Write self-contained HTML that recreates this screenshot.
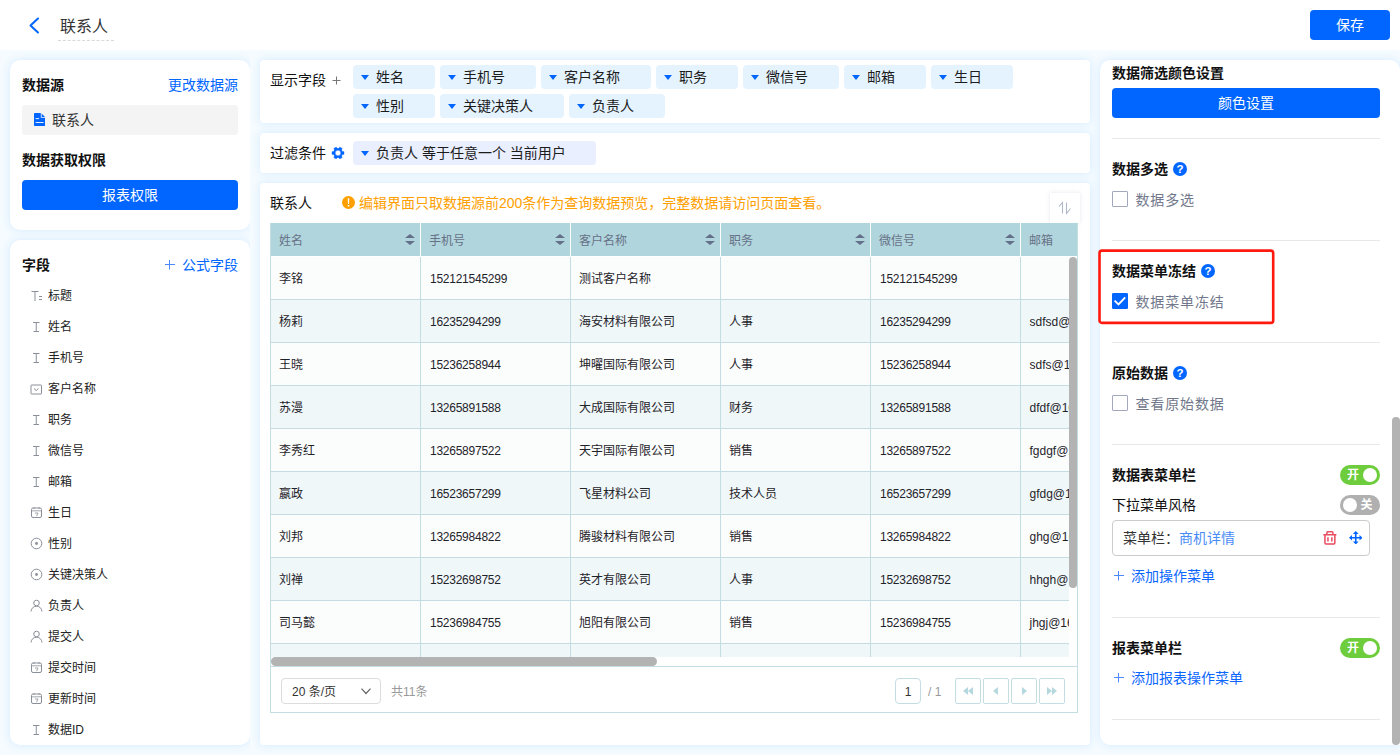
<!DOCTYPE html>
<html lang="zh-CN">
<head>
<meta charset="utf-8">
<title>联系人</title>
<style>
*{box-sizing:border-box;margin:0;padding:0}
html,body{width:1400px;height:755px;overflow:hidden}
body{background:#f5fbff;font-family:"Liberation Sans","Noto Sans CJK SC",sans-serif;font-size:14px;color:#1f2329;position:relative}
.abs{position:absolute}
.header{position:absolute;left:0;top:0;width:1400px;height:50px;background:#fff}
.back{position:absolute;left:28px;top:17px;width:12px;height:17px}
.title{position:absolute;left:58px;top:13px;width:56px;height:28px;border-bottom:1px dashed #d9d9d9}
.btn{position:absolute;background:#0066ff;color:#fff;text-align:center;border-radius:4px;font-size:14px}
.save{left:1310px;top:10px;width:80px;height:30px;line-height:30px}
.panel{position:absolute;background:#fff;border-radius:10px;box-shadow:0 0 8px #d3e9ff}
.panel.m{border-radius:4px}
.h{position:absolute;font-weight:bold;font-size:14px;line-height:20px;color:#111;white-space:nowrap}
.link{position:absolute;font-size:14px;line-height:20px;color:#0066ff;white-space:nowrap}
.t{position:absolute;white-space:nowrap;line-height:20px}
.tag{position:absolute;height:24px;border-radius:4px;background:#e5f3ff;font-size:14px;line-height:24px;color:#1c1c1c;padding-left:23px;white-space:nowrap}
.tag:before{content:"";position:absolute;left:8px;top:10px;border:4.5px solid transparent;border-top:5px solid #0066ff;border-bottom:0}
.th{position:absolute;top:0;height:33px;width:150px;line-height:37px;font-size:12px;color:#677186;padding-left:8px;border-left:1px solid #fff;white-space:nowrap;overflow:hidden}
.th i{position:absolute;right:5px;top:11px;width:10px;height:11px}
.th i:before{content:"";position:absolute;left:0;top:0;border:5px solid transparent;border-bottom:4px solid #64708a;border-top:0}
.th i:after{content:"";position:absolute;left:0;bottom:0;border:5px solid transparent;border-top:4px solid #64708a;border-bottom:0}
.tr{position:absolute;left:0;width:808px;height:43px;border-bottom:1px solid #c3dde3;background:#fbfdfd}
.tr.e{background:#eff7f9}
.td{position:absolute;top:0;height:42px;width:150px;line-height:45px;font-size:12px;color:#1f2329;padding-left:8px;border-left:1px solid #c3dde3;white-space:nowrap;overflow:hidden}
.td.n{letter-spacing:-.25px;padding-left:9px}
.td.m{padding-left:8.5px}
.pb{position:absolute;top:455px;width:26px;height:26px;border:1px solid #c3dde3;border-radius:2px;background:#fff}
.hr{position:absolute;left:12px;width:268px;height:1px;background:#e8e8e8}
.q{position:absolute;width:14px;height:14px;border-radius:50%;background:#0066ff;color:#fff;font-size:11.5px;line-height:14px;text-align:center;font-weight:bold}
.cb{position:absolute;left:12px;width:16px;height:16px;border:1px solid #a3a8bf;border-radius:1px;background:#fff}
.cb.on{background:#0066ff;border-color:#0066ff}
.cl{position:absolute;left:35.5px;font-size:14px;line-height:22px;color:#72788b;letter-spacing:.85px;white-space:nowrap}
.sw{position:absolute;left:240px;width:40px;height:20px;border-radius:10px;background:#6ecd3c;color:#fff;font-size:12px;font-weight:bold;line-height:20px}
.sw b{position:absolute;top:3px;width:14px;height:14px;border-radius:50%;background:#fff}
</style>
</head>
<body>
<div class="header">
  <svg class="back" viewBox="0 0 12 17"><polyline points="10,1.5 2.5,8.5 10,15.5" fill="none" stroke="#0066ff" stroke-width="2" stroke-linecap="round" stroke-linejoin="round"/></svg>
  <div class="title"></div>
  <div class="t" style="left:60px;top:17px;font-size:16px;color:#333">联系人</div>
  <div class="btn save">保存</div>
</div>
<div class="panel" style="left:10px;top:60px;width:240px;height:170px">
  <div class="h" style="left:12px;top:15px">数据源</div>
  <div class="link" style="right:12px;top:15px">更改数据源</div>
  <div class="abs" style="left:12px;top:45px;width:216px;height:30px;background:#f4f4f4;border-radius:3px">
    <svg class="abs" style="left:11.5px;top:8px" width="11.4" height="13" viewBox="0 0 11.4 13"><path d="M.8 0H6.8V4.7H11.4V12.2a.8 .8 0 0 1-.8 .8H.8a.8 .8 0 0 1-.8-.8V.8a.8 .8 0 0 1 .8-.8z" fill="#0066ff"/><path d="M7.6 .5L11 3.9H7.6z" fill="#0066ff"/><rect x="1.6" y="5.2" width="3.5" height=".9" fill="#fff"/><rect x="1.6" y="9.1" width="8" height=".9" fill="#fff"/></svg>
    <div class="t" style="left:30px;top:5px;font-size:14px;color:#333">联系人</div>
  </div>
  <div class="h" style="left:12px;top:90px">数据获取权限</div>
  <div class="btn" style="left:12px;top:120px;width:216px;height:30px;line-height:30px">报表权限</div>
</div>
<div class="panel" style="left:10px;top:240px;width:240px;height:505px">
  <div class="h" style="left:12px;top:15px">字段</div>
  <svg class="abs" style="left:155px;top:20px" width="10" height="10" viewBox="0 0 10 10"><path d="M4.5 0v9.5M0 4.5h10" stroke="#4d88ff" stroke-width="1" fill="none"/></svg>
  <div class="link" style="right:12px;top:15px">公式字段</div>
  <svg class="abs" style="left:19.5px;top:49px" width="13" height="13" viewBox="0 0 13 13"><path d="M1.5 2.5h7M5 2.5v9.5M9 7.5h3M9 10.5h3" stroke="#8a8f99" stroke-width="1" fill="none"/></svg><div class="t" style="left:38px;top:46px;font-size:12px;color:#222">标题</div>
  <svg class="abs" style="left:19.5px;top:80px" width="13" height="13" viewBox="0 0 13 13"><path d="M3 2.5h6.5M6.25 2.5v9M3.5 11.5h5.5" stroke="#8a8f99" stroke-width="1" fill="none"/></svg><div class="t" style="left:38px;top:77px;font-size:12px;color:#222">姓名</div>
  <svg class="abs" style="left:19.5px;top:111px" width="13" height="13" viewBox="0 0 13 13"><path d="M3 2.5h6.5M6.25 2.5v9M3.5 11.5h5.5" stroke="#8a8f99" stroke-width="1" fill="none"/></svg><div class="t" style="left:38px;top:108px;font-size:12px;color:#222">手机号</div>
  <svg class="abs" style="left:19.5px;top:142px" width="13" height="13" viewBox="0 0 13 13"><rect x="1" y="3" width="10.5" height="9" rx=".5" stroke="#8a8f99" fill="none"/><path d="M4 6.5l2.25 2 2.25-2" stroke="#8a8f99" fill="none"/></svg><div class="t" style="left:38px;top:139px;font-size:12px;color:#222">客户名称</div>
  <svg class="abs" style="left:19.5px;top:173px" width="13" height="13" viewBox="0 0 13 13"><path d="M3 2.5h6.5M6.25 2.5v9M3.5 11.5h5.5" stroke="#8a8f99" stroke-width="1" fill="none"/></svg><div class="t" style="left:38px;top:170px;font-size:12px;color:#222">职务</div>
  <svg class="abs" style="left:19.5px;top:204px" width="13" height="13" viewBox="0 0 13 13"><path d="M3 2.5h6.5M6.25 2.5v9M3.5 11.5h5.5" stroke="#8a8f99" stroke-width="1" fill="none"/></svg><div class="t" style="left:38px;top:201px;font-size:12px;color:#222">微信号</div>
  <svg class="abs" style="left:19.5px;top:235px" width="13" height="13" viewBox="0 0 13 13"><path d="M3 2.5h6.5M6.25 2.5v9M3.5 11.5h5.5" stroke="#8a8f99" stroke-width="1" fill="none"/></svg><div class="t" style="left:38px;top:232px;font-size:12px;color:#222">邮箱</div>
  <svg class="abs" style="left:19.5px;top:266px" width="13" height="13" viewBox="0 0 13 13"><rect x="1.5" y="2" width="10" height="9.5" rx="1.5" stroke="#8a8f99" fill="none"/><path d="M1.5 4.8h10M5 7h3l-1.5 3.2M4 1v2M9 1v2" stroke="#8a8f99" stroke-width=".8" fill="none"/></svg><div class="t" style="left:38px;top:263px;font-size:12px;color:#222">生日</div>
  <svg class="abs" style="left:19.5px;top:297px" width="13" height="13" viewBox="0 0 13 13"><circle cx="6.5" cy="6.5" r="5.3" stroke="#8a8f99" fill="none"/><circle cx="6.5" cy="6.5" r="1.4" fill="#8a8f99"/></svg><div class="t" style="left:38px;top:294px;font-size:12px;color:#222">性别</div>
  <svg class="abs" style="left:19.5px;top:328px" width="13" height="13" viewBox="0 0 13 13"><circle cx="6.5" cy="6.5" r="5.3" stroke="#8a8f99" fill="none"/><circle cx="6.5" cy="6.5" r="1.4" fill="#8a8f99"/></svg><div class="t" style="left:38px;top:325px;font-size:12px;color:#222">关键决策人</div>
  <svg class="abs" style="left:19.5px;top:359px" width="13" height="13" viewBox="0 0 13 13"><circle cx="6.5" cy="4" r="2.8" stroke="#8a8f99" fill="none"/><path d="M1 12.5c.3-3.2 2.5-5.3 5.5-5.3s5.2 2.1 5.5 5.3" stroke="#8a8f99" fill="none"/></svg><div class="t" style="left:38px;top:356px;font-size:12px;color:#222">负责人</div>
  <svg class="abs" style="left:19.5px;top:390px" width="13" height="13" viewBox="0 0 13 13"><circle cx="6.5" cy="4" r="2.8" stroke="#8a8f99" fill="none"/><path d="M1 12.5c.3-3.2 2.5-5.3 5.5-5.3s5.2 2.1 5.5 5.3" stroke="#8a8f99" fill="none"/></svg><div class="t" style="left:38px;top:387px;font-size:12px;color:#222">提交人</div>
  <svg class="abs" style="left:19.5px;top:421px" width="13" height="13" viewBox="0 0 13 13"><rect x="1.5" y="2" width="10" height="9.5" rx="1.5" stroke="#8a8f99" fill="none"/><path d="M1.5 4.8h10M5 7h3l-1.5 3.2M4 1v2M9 1v2" stroke="#8a8f99" stroke-width=".8" fill="none"/></svg><div class="t" style="left:38px;top:418px;font-size:12px;color:#222">提交时间</div>
  <svg class="abs" style="left:19.5px;top:452px" width="13" height="13" viewBox="0 0 13 13"><rect x="1.5" y="2" width="10" height="9.5" rx="1.5" stroke="#8a8f99" fill="none"/><path d="M1.5 4.8h10M5 7h3l-1.5 3.2M4 1v2M9 1v2" stroke="#8a8f99" stroke-width=".8" fill="none"/></svg><div class="t" style="left:38px;top:449px;font-size:12px;color:#222">更新时间</div>
  <svg class="abs" style="left:19.5px;top:483px" width="13" height="13" viewBox="0 0 13 13"><path d="M3 2.5h6.5M6.25 2.5v9M3.5 11.5h5.5" stroke="#8a8f99" stroke-width="1" fill="none"/></svg><div class="t" style="left:38px;top:480px;font-size:12px;color:#222">数据ID</div>
</div>
<div class="abs" style="left:250px;top:50px;width:10px;height:705px;background:#f5fbff"></div>
<div class="panel m" style="left:260px;top:60px;width:830px;height:63px">
  <div class="t" style="left:10px;top:10px;font-size:14px;color:#111">显示字段</div>
  <svg class="abs" style="left:72px;top:16px" width="9" height="9" viewBox="0 0 9 9"><path d="M4.5 .5v8M.5 4.5h8" stroke="#777" stroke-width="1" fill="none"/></svg>
  <div class="tag" style="left:93px;top:5px;width:82px">姓名</div><div class="tag" style="left:180px;top:5px;width:96px">手机号</div><div class="tag" style="left:281px;top:5px;width:110px">客户名称</div><div class="tag" style="left:396px;top:5px;width:82px">职务</div><div class="tag" style="left:483px;top:5px;width:96px">微信号</div><div class="tag" style="left:584px;top:5px;width:82px">邮箱</div><div class="tag" style="left:671px;top:5px;width:82px">生日</div>
  <div class="tag" style="left:93px;top:34px;width:82px">性别</div><div class="tag" style="left:180px;top:34px;width:124px">关键决策人</div><div class="tag" style="left:309px;top:34px;width:96px">负责人</div>
</div>
<div class="panel m" style="left:260px;top:133px;width:830px;height:40px">
  <div class="t" style="left:10px;top:10px;font-size:14px;color:#111">过滤条件</div>
  <svg class="abs" style="left:70.7px;top:13.3px" width="14" height="14" viewBox="0 0 14 14"><path d="M11.42 5.39L13.04 5.61L13.04 8.39L11.42 8.61L10.6 10.02L11.23 11.53L8.81 12.93L7.82 11.63L6.18 11.63L5.19 12.93L2.77 11.53L3.4 10.02L2.58 8.61L0.96 8.39L0.96 5.61L2.58 5.39L3.4 3.98L2.77 2.47L5.19 1.07L6.18 2.37L7.82 2.37L8.81 1.07L11.23 2.47L10.6 3.98zM7 4.3a2.7 2.7 0 1 0 0 5.4a2.7 2.7 0 1 0 0-5.4z" fill="#0066ff" fill-rule="evenodd" stroke="#0066ff" stroke-width=".3" stroke-linejoin="round"/></svg>
  <div class="tag" style="left:93px;top:8px;width:243px;background:#e9effe">负责人 等于任意一个 当前用户</div>
</div>
<div class="panel m" style="left:260px;top:183px;width:830px;height:562px">
  <div class="t" style="left:10px;top:10px;font-size:14px;color:#111">联系人</div>
  <svg class="abs" style="left:82px;top:13px" width="13" height="13" viewBox="0 0 13 13"><circle cx="6.5" cy="6.5" r="6.5" fill="#ffa000"/><path d="M5.7 2.3h1.6l-.3 5.7h-1z" fill="#fff"/><rect x="5.7" y="9" width="1.6" height="1.5" fill="#fff"/></svg>
  <div class="t" style="left:99px;top:10px;font-size:14px;color:#ffa000">编辑界面只取数据源前200条作为查询数据预览，完整数据请访问页面查看。</div>
  <div class="abs" style="left:790px;top:10px;width:30px;height:30px;background:#fff;box-shadow:0 0 4px rgba(150,160,200,.25)">
    <svg class="abs" style="left:8px;top:8.3px" width="14" height="14" viewBox="0 0 14 14"><path d="M1 5.5L4.5 1.5V12.5M8.5 1.5V12.5L12.5 7.5" stroke="#b0b7c8" stroke-width="1.1" fill="none"/></svg>
  </div>
  <div class="abs" style="left:10px;top:40px;width:808px;height:490px;border:1px solid #c3dde3;border-top:0;overflow:hidden;background:#fff">
    <div class="abs" style="left:0;top:0;width:808px;height:33px;background:#b0d5dd;overflow:hidden"><div class="th" style="left:-1px">姓名<i></i></div><div class="th" style="left:149px">手机号<i></i></div><div class="th" style="left:299px">客户名称<i></i></div><div class="th" style="left:449px">职务<i></i></div><div class="th" style="left:599px">微信号<i></i></div><div class="th" style="left:749px">邮箱</div></div>
    <div class="abs" style="left:0;top:34px;width:798px;height:400px;overflow:hidden">
      <div class="tr" style="top:0px"><div class="td" style="left:-1px">李铭</div><div class="td n" style="left:149px">152121545299</div><div class="td" style="left:299px">测试客户名称</div><div class="td" style="left:449px"></div><div class="td n" style="left:599px">152121545299</div><div class="td m" style="left:749px"></div></div>
      <div class="tr e" style="top:43px"><div class="td" style="left:-1px">杨莉</div><div class="td n" style="left:149px">16235294299</div><div class="td" style="left:299px">海安材料有限公司</div><div class="td" style="left:449px">人事</div><div class="td n" style="left:599px">16235294299</div><div class="td m" style="left:749px">sdfsd@163.com</div></div>
      <div class="tr" style="top:86px"><div class="td" style="left:-1px">王晓</div><div class="td n" style="left:149px">15236258944</div><div class="td" style="left:299px">坤曜国际有限公司</div><div class="td" style="left:449px">人事</div><div class="td n" style="left:599px">15236258944</div><div class="td m" style="left:749px">sdfs@163.com</div></div>
      <div class="tr e" style="top:129px"><div class="td" style="left:-1px">苏漫</div><div class="td n" style="left:149px">13265891588</div><div class="td" style="left:299px">大成国际有限公司</div><div class="td" style="left:449px">财务</div><div class="td n" style="left:599px">13265891588</div><div class="td m" style="left:749px">dfdf@163.com</div></div>
      <div class="tr" style="top:172px"><div class="td" style="left:-1px">李秀红</div><div class="td n" style="left:149px">13265897522</div><div class="td" style="left:299px">天宇国际有限公司</div><div class="td" style="left:449px">销售</div><div class="td n" style="left:599px">13265897522</div><div class="td m" style="left:749px">fgdgf@163.com</div></div>
      <div class="tr e" style="top:215px"><div class="td" style="left:-1px">嬴政</div><div class="td n" style="left:149px">16523657299</div><div class="td" style="left:299px">飞星材料公司</div><div class="td" style="left:449px">技术人员</div><div class="td n" style="left:599px">16523657299</div><div class="td m" style="left:749px">gfdg@163.com</div></div>
      <div class="tr" style="top:258px"><div class="td" style="left:-1px">刘邦</div><div class="td n" style="left:149px">13265984822</div><div class="td" style="left:299px">腾骏材料有限公司</div><div class="td" style="left:449px">销售</div><div class="td n" style="left:599px">13265984822</div><div class="td m" style="left:749px">ghg@163.com</div></div>
      <div class="tr e" style="top:301px"><div class="td" style="left:-1px">刘禅</div><div class="td n" style="left:149px">15232698752</div><div class="td" style="left:299px">英才有限公司</div><div class="td" style="left:449px">人事</div><div class="td n" style="left:599px">15232698752</div><div class="td m" style="left:749px">hhgh@163.com</div></div>
      <div class="tr" style="top:344px"><div class="td" style="left:-1px">司马懿</div><div class="td n" style="left:149px">15236984755</div><div class="td" style="left:299px">旭阳有限公司</div><div class="td" style="left:449px">销售</div><div class="td n" style="left:599px">15236984755</div><div class="td m" style="left:749px">jhgj@163.com</div></div>
      <div class="tr e" style="top:387px"><div class="td" style="left:-1px"></div><div class="td n" style="left:149px"></div><div class="td" style="left:299px"></div><div class="td" style="left:449px"></div><div class="td n" style="left:599px"></div><div class="td m" style="left:749px"></div></div>
    </div>
    <div class="abs" style="left:798px;top:34px;width:8px;height:331px;border-radius:4px;background:#b3b3b3"></div>
    <div class="abs" style="left:0;top:434px;width:386px;height:9px;border-radius:4.5px;background:#b3b3b3"></div>
    <div class="abs" style="left:0;top:443px;width:808px;height:1px;background:#c3dde3"></div>
    <div class="abs" style="left:10px;top:455px;width:100px;height:26px;border:1px solid #dcdcdc;border-radius:4px;font-size:12px;line-height:26px;color:#333;padding-left:10px">20 条/页
      <svg class="abs" style="right:9px;top:9px" width="10" height="7" viewBox="0 0 10 7"><path d="M.5 .7l4.5 4.8 4.5-4.8" stroke="#666" stroke-width="1.2" fill="none"/></svg>
    </div>
    <div class="t" style="left:120px;top:459px;font-size:12px;color:#999">共11条</div>
    <div class="pb" style="left:624px;text-align:center;font-size:12px;line-height:26px;color:#333;border-radius:4px">1</div>
    <div class="t" style="left:657px;top:459px;font-size:12px;color:#999">/ 1</div>
    <div class="pb" style="left:684px"><svg class="abs" style="left:7px;top:8px" width="10" height="8" viewBox="0 0 10 8"><path d="M5 0v8L0 4zM10 0v8L5 4z" fill="#b5d8df"/></svg></div>
    <div class="pb" style="left:712px"><svg class="abs" style="left:9px;top:8px" width="5" height="8" viewBox="0 0 5 8"><path d="M5 0v8L0 4z" fill="#b5d8df"/></svg></div>
    <div class="pb" style="left:740px"><svg class="abs" style="left:10px;top:8px" width="5" height="8" viewBox="0 0 5 8"><path d="M0 0v8l5-4z" fill="#b5d8df"/></svg></div>
    <div class="pb" style="left:768px"><svg class="abs" style="left:7px;top:8px" width="10" height="8" viewBox="0 0 10 8"><path d="M0 0v8l5-4zM5 0v8l5-4z" fill="#b5d8df"/></svg></div>
  </div>
</div>
<div class="panel" style="left:1100px;top:60px;width:300px;height:685px;border-radius:10px 10px 0 10px;overflow:hidden">
  <div class="h" style="left:12px;top:3px">数据筛选颜色设置</div>
  <div class="btn" style="left:12px;top:28px;width:268px;height:30px;line-height:30px">颜色设置</div>
  <div class="hr" style="top:78px"></div>
  <div class="h" style="left:12px;top:99px">数据多选</div>
  <div class="q" style="left:73px;top:102px">?</div>
  <div class="cb" style="top:131px"></div>
  <div class="cl" style="top:129px">数据多选</div>
  <div class="hr" style="top:180px"></div>
  <div class="h" style="left:12px;top:201px">数据菜单冻结</div>
  <div class="q" style="left:101px;top:204px">?</div>
  <div class="cb on" style="top:233px"><svg class="abs" style="left:-1px;top:-1px" width="16" height="16" viewBox="0 0 16 16"><path d="M2.6 7.6L6.5 11.4L13.2 4.3" stroke="#fff" stroke-width="1.9" fill="none"/></svg></div>
  <div class="cl" style="top:231px">数据菜单冻结</div>
  <div class="hr" style="top:282px"></div>
  <div class="h" style="left:12px;top:303px">原始数据</div>
  <div class="q" style="left:73px;top:306px">?</div>
  <div class="cb" style="top:335px"></div>
  <div class="cl" style="top:333px">查看原始数据</div>
  <div class="hr" style="top:384px"></div>
  <div class="h" style="left:12px;top:405px">数据表菜单栏</div>
  <div class="sw" style="top:405px"><span class="abs" style="left:7px;top:0">开</span><b style="right:3px"></b></div>
  <div class="t" style="left:12px;top:435px;font-size:14px;color:#111">下拉菜单风格</div>
  <div class="sw" style="top:435px;background:#b0b0b0"><b style="left:3px"></b><span class="abs" style="right:7.5px;top:0">关</span></div>
  <div class="abs" style="left:12px;top:460px;width:258px;height:36px;border:1px solid #ccc;border-radius:4px;background:#fff">
    <div class="t" style="left:10px;top:7px;font-size:14px;color:#333">菜单栏：<span style="color:#4a8cf5">商机详情</span></div>
    <svg class="abs" style="left:210px;top:9.9px" width="13.8" height="13.8" viewBox="0 0 13.8 13.8"><path d="M.4 3.7H13.4M3.9 3.7V1.75a1 1 0 0 1 1-1h4a1 1 0 0 1 1 1V3.7M1.95 3.7V12a1 1 0 0 0 1 1h7.9a1 1 0 0 0 1-1V3.7M4.95 6.3V10.4M8.85 6.3V10.4" stroke="#e84a5f" stroke-width="1.5" fill="none"/></svg>
    <svg class="abs" style="left:235.9px;top:9.9px" width="13.5" height="13.5" viewBox="0 0 13.5 13.5"><path d="M6.75 2V11.5M2 6.75H11.5" stroke="#0066ff" stroke-width="1.6" fill="none"/><path d="M6.75 0L9.6 3H3.9zM6.75 13.5L9.6 10.5H3.9zM0 6.75L3 4.1V9.4zM13.5 6.75L10.5 4.1V9.4z" fill="#0066ff"/></svg>
  </div>
  <svg class="abs" style="left:14px;top:511px" width="10" height="10" viewBox="0 0 10 10"><path d="M4.5 0v9.5M0 4.5h10" stroke="#4d88ff" stroke-width="1" fill="none"/></svg>
  <div class="link" style="left:31px;top:506px;color:#0a66ff">添加操作菜单</div>
  <div class="hr" style="top:557px"></div>
  <div class="h" style="left:12px;top:578px">报表菜单栏</div>
  <div class="sw" style="top:578px"><span class="abs" style="left:7px;top:0">开</span><b style="right:3px"></b></div>
  <svg class="abs" style="left:14px;top:613px" width="10" height="10" viewBox="0 0 10 10"><path d="M4.5 0v9.5M0 4.5h10" stroke="#4d88ff" stroke-width="1" fill="none"/></svg>
  <div class="link" style="left:31px;top:608px;color:#0a66ff">添加报表操作菜单</div>
  <div class="hr" style="top:659px"></div>
  <div class="abs" style="left:292px;top:357px;width:8px;height:328px;border-radius:4px;background:#b3b3b3"></div>
</div>
<svg class="abs" style="left:1095px;top:245px" width="185" height="85" viewBox="0 0 185 85"><rect x="4.5" y="5.6" width="173.7" height="72.3" rx="2.5" fill="none" stroke="#ff1a10" stroke-width="2.6"/></svg>
</body>
</html>
